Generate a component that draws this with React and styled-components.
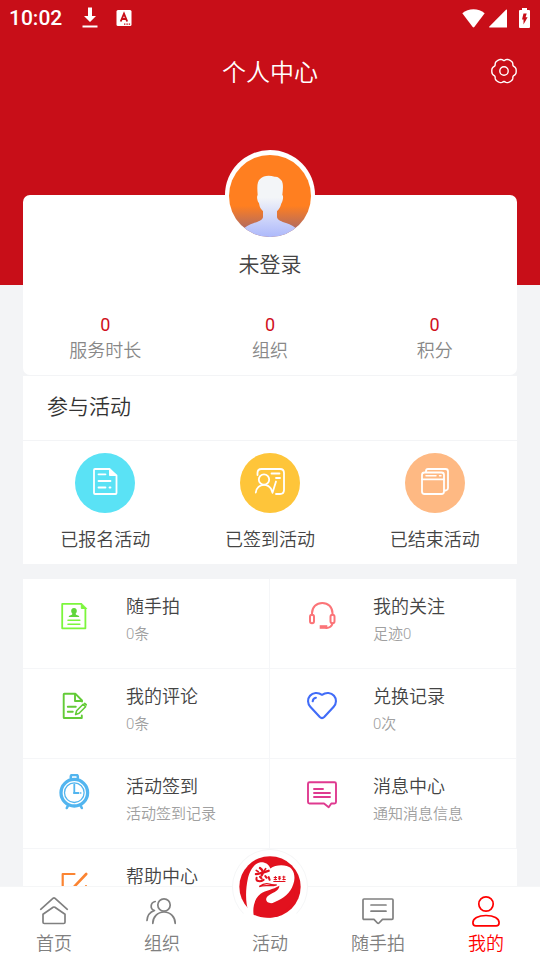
import React from "react";
import styled, { createGlobalStyle } from "styled-components";

const stats = [
  { label: "服务时长", value: 0 },
  { label: "组织", value: 0 },
  { label: "积分", value: 0 },
];

// six wide lobes with narrow notches between them
const gearPath = () => {
  const points = [];
  for (let deg = 0; deg < 360; deg += 5) {
    const rad = (deg * Math.PI) / 180;
    const r = 12.2 - 1.7 * Math.pow((1 - Math.cos(6 * rad)) / 2, 3);
    points.push(`${(14 + r * Math.cos(rad)).toFixed(2)} ${(14 + r * Math.sin(rad)).toFixed(2)}`);
  }
  return `M${points.join("L")}Z`;
};

const SettingIcon = () => (
  <svg width="28" height="28" viewBox="0 0 28 28" fill="none" stroke="#fff" strokeWidth="1.4" strokeLinejoin="round">
    <path d={gearPath()} />
    <circle cx="14" cy="14" r="4.2" />
  </svg>
);

const DownloadIcon = () => (
  <svg width="16" height="22" viewBox="0 0 16 22" fill="#fff">
    <path d="M6 0.500h4v8.500h4L8 15 2 9h4z" />
    <path d="M0.500 18.500h15v2h-15z" />
  </svg>
);

const InputIcon = () => (
  <svg width="16" height="16" viewBox="0 0 16 16">
    <rect x="0.500" y="0" width="15" height="16" rx="1.500" fill="#fff" />
    <path d="M4.700 11.500L8 3.700l3.200 7.800M5.900 9h4.200" fill="none" stroke="#c80e18" strokeWidth="1.900" />
    <path d="M8 13.500h1.400v1.300H8zM10.400 13.500h1.400v1.300h-1.400zM12.700 13.500h1.400v1.300h-1.400z" fill="#c80e18" />
  </svg>
);

const WifiIcon = () => (
  <svg width="23" height="19" viewBox="0 0 23 19" fill="#fff">
    <path d="M0.300 4.300C3.500 1.500 7.300 0.200 11.500 0.200s8 1.300 11.200 4.100L12.300 18q-.8.900-1.600 0z" />
  </svg>
);

const SignalIcon = () => (
  <svg width="18" height="19" viewBox="0 0 18 19" fill="#fff">
    <path d="M18 0.500v18H0.500q-.8-.4-.1-1.100L17 .8z" />
  </svg>
);

const BatteryIcon = () => (
  <svg width="11" height="20" viewBox="0 0 11 20">
    <path d="M3 0h5v2h2q1 0 1 1v16q0 1-1 1H1q-1 0-1-1V3q0-1 1-1h2z" fill="#fff" />
    <path d="M4.500 5.500h3.200L6.600 9.300h2L4.500 16.500v-5H3z" fill="#c80e18" />
  </svg>
);

const AvatarPicture = () => (
  <svg width="90" height="90" viewBox="135 30 270 270">
    <defs>
      <linearGradient id="avatarBack" x1="0" y1="0" x2="0" y2="1">
        <stop offset="0.620" stopColor="#ff7f20" />
        <stop offset="0.900" stopColor="#b06a62" />
      </linearGradient>
      <linearGradient id="avatarBody" x1="0" y1="0" x2="0" y2="1">
        <stop offset="0.350" stopColor="#f3f5f8" />
        <stop offset="1" stopColor="#aab6fb" />
      </linearGradient>
      <clipPath id="avatarClip">
        <circle cx="270" cy="168" r="123" />
      </clipPath>
    </defs>
    <circle cx="270" cy="165" r="135" fill="#fff" />
    <g clipPath="url(#avatarClip)">
      <rect x="147" y="45" width="246" height="246" fill="url(#avatarBack)" />
      <path
        d="M233 165C231 140 231 124 241 116C250 107 266 104 284 110C294 109 300 116 304 121C311 130 309 148 307 165C311 168 309 178 306 187C303 190 303 196 300 202C297 208 293 211 291 214V232C293 241 305 245 318 249C333 254 343 260 350 267V296H190V267C197 260 207 254 222 249C235 245 247 241 249 232V214C245 209 241 206 239 199C238 195 238 190 235 187C231 180 230 168 233 165Z"
        fill="url(#avatarBody)"
      />
    </g>
  </svg>
);

const Round = ({ children }) => (
  <svg
    width="60"
    height="60"
    viewBox="0 0 60 60"
    fill="none"
    stroke="#fff"
    strokeWidth="1.800"
    strokeLinecap="round"
    strokeLinejoin="round"
  >
    {children}
  </svg>
);

const SignedUpIcon = () => (
  <Round>
    <path d="M34 16H20q-1 0-1 1v23q0 1 1 1h20.500q1 0 1-1V22.500z" />
    <path d="M34.500 15.500v7H41z" fill="#fff" strokeWidth="1" />
    <path d="M23.500 21.300h7M23.500 28h12M23.500 34.500h7M34.500 34.500h1" />
  </Round>
);

const CheckedInIcon = () => (
  <Round>
    <path d="M17.500 22v-2q0-4 4-4h18.500q4 0 4 4v17q0 4-4 4h-4" />
    <circle cx="24" cy="26.500" r="5.200" />
    <path d="M15.800 39.500c.5-4.500 4-7.700 8.200-7.700 3 0 5.500 1.600 7 4l1.500 4 3.500-11.300" />
    <path d="M31.500 20.500h8M36 25h4" />
  </Round>
);

const FinishedIcon = () => (
  <Round>
    <rect x="17" y="19.500" width="22" height="21.500" rx="2.500" />
    <path d="M21 19v-1q0-2 2-2h17.500q2.500 0 2.500 2.500V35q0 2-2 2.500h-1" />
    <path d="M17 26.300h22" />
    <path d="M21 22.800h10M34.500 22.800h1.500" strokeWidth="1.500" />
  </Round>
);

const Line = ({ color, width = 2, children }) => (
  <svg
    width="44"
    height="44"
    viewBox="0 0 44 44"
    fill="none"
    stroke={color}
    strokeWidth={width}
    strokeLinecap="round"
    strokeLinejoin="round"
  >
    {children}
  </svg>
);

const SnapIcon = () => (
  <Line color="#7cf63c" width={1.8}>
    <path d="M27.800 9.900H9.200v24.400h23.200V14.500" />
    <path d="M28.300 9.500v5h5z" fill="#7cf63c" strokeWidth="1" />
    <path
      d="M21 14c2 0 3 1.400 2.800 3.200-.1 1.200-.7 2-1.200 2.600 0 1.600 3.500 1.200 3.700 3.200H15.700c.2-2 3.700-1.600 3.700-3.200-.5-.6-1.100-1.400-1.200-2.600-.2-1.800.8-3.200 2.800-3.200z"
      fill="#5fd63a"
      stroke="none"
    />
    <path d="M15 26.300h11.800M15 30.300h11.800" strokeWidth="1.600" />
  </Line>
);

const CommentIcon = () => (
  <Line color="#63cb37" width={1.9}>
    <path d="M28.800 31.500V34H11.300q-.600 0-.600-.600V10.300q0-.600.600-.600h11l6.700 6.800v1" />
    <path d="M22 10v7h6.500" />
    <path d="M14.800 22.800h8M14.800 27.800h5" />
    <path d="M22.600 30.500l1-3.700 6.500-6.500 2.500 2.500-6.500 6.500z" strokeWidth="1.600" />
    <path d="M31.600 19.500l1.500 1.300" />
  </Line>
);

const FollowIcon = () => (
  <Line color="#fb7478">
    <rect x="10" y="20.800" width="4" height="8.400" rx="2" />
    <rect x="30.500" y="20.800" width="4" height="8.400" rx="2" />
    <path d="M12 20.500v-1.200C12 13 16.500 9 22.300 9s10.200 4 10.200 10.300v1.200" />
    <path d="M32.500 29.500c-.8 3-3 4.400-6.200 4.500" />
    <path d="M21.500 33h4" strokeWidth="3.600" strokeLinecap="square" />
  </Line>
);

const HeartIcon = () => (
  <Line color="#416cf8" width={2.1}>
    <path d="M22 10.800C18 8 12.800 8.500 10 11.700c-2.800 3.200-2.500 8 .3 11L19.800 33q2.200 2.200 4.400 0l9.500-10.300c2.800-3 3.100-7.800.3-11C31.200 8.500 26 8 22 10.800z" />
    <path d="M12.700 17.300c.2-1.900 1.300-3.100 3.200-3.500" />
  </Line>
);

const ClockIcon = () => (
  <Line color="#52b5ef">
    <circle cx="21.300" cy="18.700" r="13.300" strokeWidth="3.300" />
    <circle cx="21.300" cy="18.700" r="9.800" strokeWidth="1.300" />
    <path d="M17.800 4V2.500q0-1.500 1.500-1.500h4q1.500 0 1.500 1.500V4" strokeWidth="2.500" />
    <path d="M14.800 32l-1 2M27.800 32l1 2" strokeWidth="2.600" />
    <path d="M21.300 10.500v8.500" strokeWidth="1.800" />
    <path d="M20.300 19h8" strokeDasharray="6 1" strokeLinecap="butt" />
  </Line>
);

const MessageIcon = () => (
  <Line color="#df3a90" width={1.9}>
    <path d="M9.500 8.200h25q1.500 0 1.500 1.500V28q0 1.500-1.500 1.500h-3.200l-2.600 3.800-4.700-3.800H9.500Q8 29.500 8 28V9.700q0-1.500 1.500-1.500z" />
    <path d="M14 15h9M14 19h16M14 23h16" />
  </Line>
);

const HelpIcon = () => (
  <Line color="#fb8432" width={2.2}>
    <path d="M21.500 10H9.700v24H33V22" />
    <path d="M33.200 10L19.500 24.500" strokeWidth="2.600" />
  </Line>
);

const Tab32 = ({ children }) => (
  <svg
    width="32"
    height="32"
    viewBox="0 0 32 32"
    fill="none"
    stroke="currentColor"
    strokeWidth="1.700"
    strokeLinecap="round"
    strokeLinejoin="round"
  >
    {children}
  </svg>
);

const HomeIcon = () => (
  <Tab32>
    <path d="M2.700 14.300L15.200 3.200q.8-.6 1.600 0l12.500 11.100" />
    <path d="M5 19.300v7.900q0 1.300 1.300 1.300h19.400q1.300 0 1.300-1.300v-7.900l-10.100-7q-.9-.6-1.800 0z" />
  </Tab32>
);

const GroupIcon = () => (
  <Tab32>
    <circle cx="18" cy="10" r="6.200" />
    <path d="M6.800 28.300c0-6 4.600-11.300 11.200-11.300s11.200 5.300 11.200 11.300" />
    <path d="M9.200 6.500c-5 1-5.500 7.500-.7 9C4 17 1.300 20.500 1 25.500" />
  </Tab32>
);

const BubbleIcon = () => (
  <Tab32>
    <path d="M2 4h28q1 0 1 1v18.300q0 1-1 1h-9.500L17 28q-.8.800-1.600 0L12 24.300H2q-1 0-1-1V5q0-1 1-1z" />
    <path d="M9 10h15M9 16.200h15" />
  </Tab32>
);

const MineIcon = () => (
  <Tab32>
    <circle cx="16" cy="9" r="7.200" />
    <path d="M16 20.500c-8 0-13.100 3-13.100 7.200 0 2 1 3.200 3 3.200h20.200c2 0 3-1.200 3-3.200 0-4.200-5.100-7.200-13.100-7.200z" />
  </Tab32>
);

const LogoIcon = () => (
  <svg width="62" height="62" viewBox="60 47 184 185">
    <circle cx="152" cy="139" r="91.500" fill="#e2111e" />
    <path
      d="M104 226L88 213C79 190 78 150 86 114C92 88 106 68 124 66C138 65 148 72 153 84C166 75 186 72 202 77C220 82 228 100 224 122C218 150 200 168 176 180C160 188 148 192 140 200L104 226Z"
      fill="#fff"
    />
    <path
      d="M103 222C100 199 106 174 124 160C140 149 160 148 180 136C179 151 163 156 150 163C139 169 137 180 147 186C159 192 177 186 191 176L224 148L228 180L180 226C154 234 124 233 103 222Z"
      fill="#e2111e"
    />
    <g fill="none" stroke="#e2111e" strokeLinecap="round">
      <path d="M110 101C122 100 136 95 148 91" strokeWidth="7" />
      <path d="M122 83C130 88 133 96 127 105" strokeWidth="7" />
      <path d="M111 90l6 4M139 85l-5 7" strokeWidth="5" />
      <path d="M112 112C108 124 124 124 133 118M122 109l5 5M138 107l4 5M148 110l3 8" strokeWidth="6" />
      <path d="M120 138C131 130 142 128 151 131C158 134 166 133 172 133C155 139 137 132 120 138Z" strokeWidth="4" />
    </g>
    <path
      d="M163 111h10M168 107v12M163 117h10M176 110h9M176 115h9M180 107v12M189 110h9M193 106v13M189 117h10M162 123h36"
      fill="none"
      stroke="#e2111e"
      strokeWidth="3"
    />
  </svg>
);

const activities = [
  { name: "已报名活动", color: "#5ae2f5", icon: <SignedUpIcon /> },
  { name: "已签到活动", color: "#fec53a", icon: <CheckedInIcon /> },
  { name: "已结束活动", color: "#feb983", icon: <FinishedIcon /> },
];

const menus = [
  { name: "随手拍", desc: "0条", icon: <SnapIcon /> },
  { name: "我的关注", desc: "足迹0", icon: <FollowIcon /> },
  { name: "我的评论", desc: "0条", icon: <CommentIcon /> },
  { name: "兑换记录", desc: "0次", icon: <HeartIcon /> },
  { name: "活动签到", desc: "活动签到记录", icon: <ClockIcon /> },
  { name: "消息中心", desc: "通知消息信息", icon: <MessageIcon /> },
  { name: "帮助中心", desc: "", icon: <HelpIcon /> },
];

const tabs = [
  { name: "首页", icon: <HomeIcon /> },
  { name: "组织", icon: <GroupIcon /> },
  { name: "活动", icon: <LogoIcon />, center: true },
  { name: "随手拍", icon: <BubbleIcon /> },
  { name: "我的", icon: <MineIcon />, active: true },
];

const App = () => {
  return (
    <Screen>
      <GlobalStyle />
      <Content>
        <Header>
          <StatusBar>
            <Time>10:02</Time>
            <DownloadIcon />
            <InputIcon />
            <StatusRight>
              <WifiIcon />
              <SignalIcon />
              <BatteryIcon />
            </StatusRight>
          </StatusBar>
          <TitleBar>
            <Title>个人中心</Title>
            <SettingButton type="button" aria-label="设置">
              <SettingIcon />
            </SettingButton>
          </TitleBar>
        </Header>
        <Main>
          <ProfileCard>
            <Avatar>
              <AvatarPicture />
            </Avatar>
            <UserName>未登录</UserName>
            <Thirds>
              {stats.map((stat) => (
                <Stat key={stat.label}>
                  <StatValue>{stat.value}</StatValue>
                  <StatLabel>{stat.label}</StatLabel>
                </Stat>
              ))}
            </Thirds>
          </ProfileCard>
          <Section>
            <SectionTitle>参与活动</SectionTitle>
            <Thirds>
              {activities.map((activity) => (
                <Activity key={activity.name} type="button">
                  <Circle $color={activity.color}>{activity.icon}</Circle>
                  {activity.name}
                </Activity>
              ))}
            </Thirds>
          </Section>
          <MenuGrid>
            {menus.map((menu) => (
              <MenuItem key={menu.name} type="button">
                <MenuIcon>{menu.icon}</MenuIcon>
                <MenuText>
                  <MenuName>{menu.name}</MenuName>
                  <MenuDesc>{menu.desc}</MenuDesc>
                </MenuText>
              </MenuItem>
            ))}
          </MenuGrid>
        </Main>
      </Content>
      <TabBar>
        {tabs.map((tab) => (
          <Tab key={tab.name} href="#" $active={tab.active}>
            {tab.center ? <LogoCircle>{tab.icon}</LogoCircle> : tab.icon}
            <TabName>{tab.name}</TabName>
          </Tab>
        ))}
      </TabBar>
    </Screen>
  );
};
export default App;

const GlobalStyle = createGlobalStyle`
  * {
    box-sizing: border-box;
  }
  body {
    margin: 0;
    background: #f3f4f6;
    font-family: Roboto, "Noto Sans CJK SC", sans-serif;
    font-weight: 350;
  }
  button {
    padding: 0;
    border: 0;
    background: none;
    font: inherit;
    color: inherit;
    cursor: pointer;
  }
  svg {
    display: block;
    flex: none;
  }
`;

const Screen = styled.div`
  display: flex;
  flex-direction: column;
  height: 100vh;
`;

const Content = styled.div`
  flex: 1;
  min-height: 0;
  overflow-y: auto;
  scrollbar-width: none;
`;

const Header = styled.header`
  height: 285px;
  background: #c80e18;
  color: white;
`;

const StatusBar = styled.div`
  display: flex;
  align-items: center;
  height: 36px;
  padding: 0 10px 0 9px;
  gap: 18px;
`;

const Time = styled.span`
  margin-right: 2px;
  font-size: 21px;
  font-weight: 500;
`;

const StatusRight = styled.div`
  display: flex;
  align-items: center;
  gap: 4px;
  margin-left: auto;

  & > :last-child {
    margin-left: 8px;
  }
`;

const TitleBar = styled.div`
  display: grid;
  grid-template-columns: 1fr auto 1fr;
  align-items: center;
  height: 74px;
  padding: 0 22px;
`;

const Title = styled.h1`
  grid-column: 2;
  margin: 0;
  font-size: 24px;
  font-weight: 350;
  line-height: 32px;
`;

const SettingButton = styled.button`
  justify-self: end;
  margin-bottom: 4px;
`;

const Main = styled.main`
  margin-top: -90px;
  padding: 0 23px;
`;

const ProfileCard = styled.section`
  display: flex;
  flex-direction: column;
  align-items: center;
  padding-bottom: 12px;
  border-radius: 7px;
  background: white;
`;

const Avatar = styled.div`
  margin-top: -45px;
`;

const UserName = styled.h2`
  margin: 11px 0 34px;
  font-size: 21px;
  font-weight: 350;
  line-height: 28px;
  color: #444;
`;

const Thirds = styled.div`
  display: grid;
  grid-template-columns: repeat(3, 1fr);
  width: 100%;
`;

const Stat = styled.div`
  display: flex;
  flex-direction: column;
  align-items: center;
  gap: 2px;
  font-size: 18px;
  line-height: 24px;
`;

const StatValue = styled.span`
  font-weight: 400;
  color: #d0101c;
`;

const StatLabel = styled.span`
  color: #888;
`;

const Section = styled.section`
  margin: 1px 0 15px;
  background: white;
`;

const SectionTitle = styled.h2`
  margin: 0;
  padding: 17px 24px 19px;
  border-bottom: 1px solid #f3f4f6;
  font-size: 21px;
  font-weight: 350;
  line-height: 28px;
  color: #333;
`;

const Activity = styled.button`
  display: flex;
  flex-direction: column;
  align-items: center;
  gap: 15px;
  padding: 12px 0;
  font-size: 18px;
  line-height: 24px;
  color: #444;
`;

const Circle = styled.span`
  border-radius: 50%;
  background: ${({ $color }) => $color};
`;

const MenuGrid = styled.div`
  display: grid;
  grid-template-columns: repeat(2, 1fr);
  background: white;
`;

const MenuItem = styled.button`
  display: flex;
  align-items: flex-start;
  height: 90px;
  padding-top: 15px;
  border-right: 1px solid #f5f6f8;
  border-bottom: 1px solid #f5f6f8;
  text-align: left;
`;

const MenuIcon = styled.span`
  display: flex;
  justify-content: center;
  width: 103px;
`;

const MenuText = styled.span`
  display: flex;
  flex-direction: column;
  gap: 4px;
  padding-top: 1px;
`;

const MenuName = styled.span`
  font-size: 18px;
  line-height: 24px;
  color: #444;
`;

const MenuDesc = styled.span`
  font-size: 15px;
  line-height: 22px;
  color: #a0a0a0;
`;

const TabBar = styled.nav`
  display: grid;
  grid-template-columns: repeat(5, 1fr);
  grid-template-rows: 100%;
  height: 74px;
  border-top: 1px solid #f5f6f7;
  background: white;
`;

const Tab = styled.a`
  display: flex;
  flex-direction: column;
  align-items: center;
  justify-content: flex-end;
  gap: 4px;
  padding-bottom: 3px;
  text-decoration: none;
  color: ${({ $active }) => ($active ? "#ff0000" : "#808080")};
`;

const LogoCircle = styled.span`
  display: flex;
  flex: none;
  justify-content: center;
  align-items: center;
  width: 76px;
  height: 76px;
  margin-bottom: 2px;
  border: 1px solid #f5f6f7;
  border-bottom-color: white;
  border-radius: 50%;
  background: white;
`;

const TabName = styled.span`
  font-size: 18px;
  line-height: 26px;
`;
